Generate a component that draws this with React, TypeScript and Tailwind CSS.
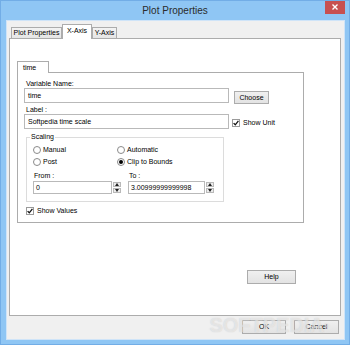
import React from 'react';

function Tab({ label, active, w }: { label: string; active?: boolean; w: string }) {
  return (
    <div
      className={`${w} flex items-center justify-center border border-[#acacac] text-[7px] leading-[8px] text-black ${
        active ? 'relative z-10 -mb-px h-[15px] border-b-0 bg-white pb-[2px]' : 'h-[11px] border-b-0 bg-gradient-to-b from-[#f3f3f3] to-[#e5e5e5]'
      }`}
    >
      {label}
    </div>
  );
}

function Button({ label, className }: { label: string; className: string }) {
  return (
    <div
      className={`${className} flex items-center justify-center border border-[#acacac] bg-gradient-to-b from-[#f0f0f0] to-[#e3e3e3] text-[7px] leading-[8px] text-black`}
    >
      {label}
    </div>
  );
}

function TextBox({ value, w }: { value: string; w: string }) {
  return (
    <div className={`${w} flex h-[15px] items-center border border-[#b9b9b9] bg-white pl-[3px] text-[7px] leading-[8px] text-black`}>
      {value}
    </div>
  );
}

function Check({ label }: { label: string }) {
  return (
    <div className="flex items-center gap-[3px] text-[7px] leading-[8px] text-black">
      <div className="flex h-[8px] w-[8px] items-center justify-center border border-[#9a9a9a] bg-white">
        <svg width="6" height="6" viewBox="0 0 6 6">
          <path d="M0.6 3.1 L2.3 4.8 L5.4 0.9" fill="none" stroke="#111" strokeWidth="1.3" />
        </svg>
      </div>
      {label}
    </div>
  );
}

function Radio({ label, checked }: { label: string; checked?: boolean }) {
  return (
    <div className="flex h-[8px] items-center gap-[2px] text-[7px] leading-[8px] text-black">
      <div className="flex h-[8px] w-[8px] items-center justify-center rounded-full border border-[#8a8a8a] bg-white">
        {checked && <div className="h-[4px] w-[4px] rounded-full bg-black" />}
      </div>
      {label}
    </div>
  );
}

function Spin({ value, w }: { value: string; w: string }) {
  return (
    <div className="flex items-stretch gap-[1px]">
      <div className={`${w} flex h-[13px] items-center border border-[#b9b9b9] bg-white pl-[2px] text-[7px] leading-[8px] text-black`}>
        {value}
      </div>
      <div className="flex w-[8px] flex-col gap-[1px] py-[1px]">
        <div className="flex flex-1 items-center justify-center border border-[#b9b9b9] bg-[#ececec]">
          <svg width="4" height="3" viewBox="0 0 4 3">
            <path d="M0 3 L2 0 L4 3 Z" fill="#222" />
          </svg>
        </div>
        <div className="flex flex-1 items-center justify-center border border-[#b9b9b9] bg-[#ececec]">
          <svg width="4" height="3" viewBox="0 0 4 3">
            <path d="M0 0 L4 0 L2 3 Z" fill="#222" />
          </svg>
        </div>
      </div>
    </div>
  );
}

export default function App() {
  return (
    <div className="relative flex h-[345px] w-[350px] flex-col overflow-hidden border border-[#72ade6] bg-[#8fc6f4] font-['Liberation_Sans',Arial,sans-serif]">
      {/* Title bar */}
      <div className="grid h-[20px] shrink-0 grid-cols-[1fr_auto_1fr]">
        <div />
        <div className="flex items-center text-[10px] leading-[12px] text-[#2b2b2b]">Plot Properties</div>
        <div className="flex justify-end pr-[4px]">
          <div className="-mt-px flex h-[14px] w-[20px] items-center justify-center bg-[#c75050]">
            <svg width="6" height="6" viewBox="0 0 6 6">
              <path d="M0.5 0.5 L5.5 5.5 M5.5 0.5 L0.5 5.5" stroke="#fff" strokeWidth="1.4" />
            </svg>
          </div>
        </div>
      </div>

      {/* Client area */}
      <div className="ml-[6px] flex h-[318px] w-[337px] flex-col bg-[#f0f0f0] shadow-[0_0_0_1px_#cfe4f8]">
        <div className="ml-[4px] flex items-end pt-[3px]">
          <Tab label="Plot Properties" w="w-[51px]" />
          <Tab label="X-Axis" w="w-[30px]" active />
          <Tab label="Y-Axis" w="w-[25px]" />
        </div>

        <div className="ml-[2px] flex h-[278px] w-[332px] flex-col border border-[#acacac] bg-white pl-[7px] pt-[22px]">
          <div className="relative z-10 -mb-px flex h-[12px] w-[32px] items-center border border-b-0 border-[#acacac] bg-white pl-[5px] text-[7px] leading-[8px] text-black">
            time
          </div>
          <div className="flex h-[151px] w-[287px] flex-col border border-[#acacac] bg-white">
            <div className="ml-[8px] mt-[7px] text-[7px] leading-[8px] text-black">Variable Name:</div>
            <div className="ml-[6px] flex items-start">
              <TextBox value="time" w="w-[205px]" />
              <Button label="Choose" className="ml-[5px] mt-[3px] h-[13px] w-[35px]" />
            </div>
            <div className="ml-[8px] mt-[2px] text-[7px] leading-[8px] text-black">Label :</div>
            <div className="ml-[6px] flex items-start">
              <TextBox value="Softpedia time scale" w="w-[205px]" />
              <div className="ml-[3px] mt-[5px]">
                <Check label="Show Unit" />
              </div>
            </div>

            {/* Scaling group */}
            <div className="ml-[8px] mt-[8px] flex w-[198px] flex-col border border-[#dcdcdc] pb-[7px]">
              <div className="-mt-[5px] ml-[3px] w-fit bg-white px-[1px] text-[7px] leading-[8px] text-black">Scaling</div>
              <div className="mt-[5px] grid grid-cols-[84px_auto] gap-y-[4px] pl-[6px]">
                <Radio label="Manual" />
                <Radio label="Automatic" />
                <Radio label="Post" />
                <Radio label="Clip to Bounds" checked />
              </div>
              <div className="mt-[6px] grid grid-cols-[95px_auto] pl-[6px] text-[7px] leading-[8px] text-black">
                <div className="pl-[1px]">From :</div>
                <div className="pl-[1px]">To :</div>
              </div>
              <div className="mt-[1px] grid grid-cols-[95px_auto] pl-[6px]">
                <Spin value="0" w="w-[79px]" />
                <Spin value="3.00999999999998" w="w-[77px]" />
              </div>
            </div>

            <div className="ml-[8px] mt-[5px]">
              <Check label="Show Values" />
            </div>
          </div>

          <Button label="Help" className="ml-[230px] mt-[47px] h-[14px] w-[49px]" />
        </div>

        <div className="mt-[4px] flex justify-end gap-[8px] pr-[5px]">
          <Button label="OK" className="h-[14px] w-[44px]" />
          <Button label="Cancel" className="h-[14px] w-[45px]" />
        </div>
      </div>

      {/* watermark */}
      <div className="pointer-events-none absolute bottom-[9px] right-[20px] text-[20px] font-bold leading-[20px] text-white/50 [text-shadow:0_0_1px_rgba(160,160,160,0.5)]">
        SOFTPEDIA<sup className="text-[7px]">®</sup>
      </div>
    </div>
  );
}
